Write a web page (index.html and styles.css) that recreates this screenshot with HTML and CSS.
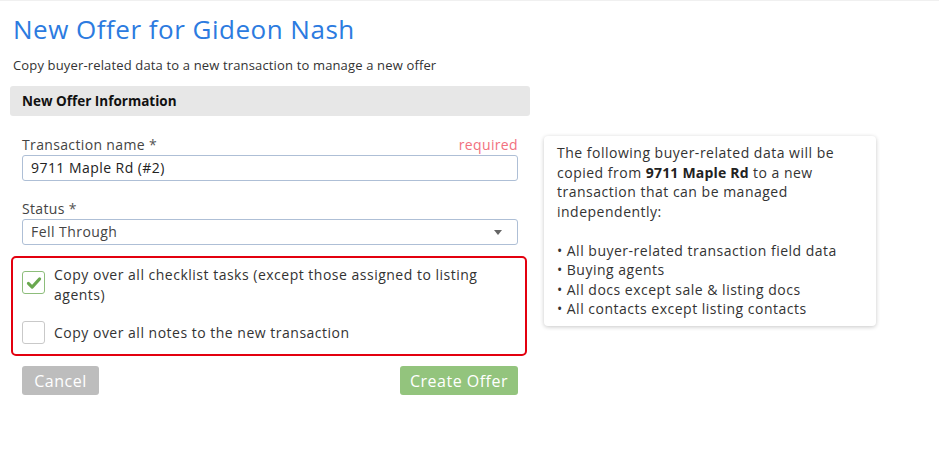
FILE: index.html
```html
<!DOCTYPE html>
<html>
<head>
<meta charset="utf-8">
<link rel="stylesheet" href="styles.css">
</head>
<body>
<div class="topline"></div>
<div class="page">
  <h1 class="title">New Offer for Gideon Nash</h1>
  <p class="subtitle">Copy buyer-related data to a new transaction to manage a new offer</p>
  <div class="layout">
    <div class="left">
      <div class="section-bar">New Offer Information</div>
      <div class="form">
        <div class="label-row">
          <span class="label">Transaction name <span class="star">*</span></span>
          <span class="required">required</span>
        </div>
        <div class="input">9711 Maple Rd (#2)</div>
        <div class="label-row status-row">
          <span class="label">Status <span class="star">*</span></span>
        </div>
        <div class="input select">
          <span>Fell Through</span>
          <span class="caret"></span>
        </div>
        <div class="highlight">
          <div class="check-row first">
            <span class="checkbox checked">
              <svg viewBox="0 0 24 24" width="18" height="18"><path d="M4.5 12.5 L9.5 17.5 L19.5 6.5" fill="none" stroke="#6aa84f" stroke-width="4" stroke-linecap="round" stroke-linejoin="round"/></svg>
            </span>
            <span class="check-text">Copy over all checklist tasks (except those assigned to listing agents)</span>
          </div>
          <div class="check-row second">
            <span class="checkbox"></span>
            <span class="check-text">Copy over all notes to the new transaction</span>
          </div>
        </div>
        <div class="buttons">
          <button class="btn cancel">Cancel</button>
          <button class="btn create">Create Offer</button>
        </div>
      </div>
    </div>
    <div class="info">
      <p>The following buyer-related data will be<br>copied from <b>9711 Maple Rd</b> to a new<br>transaction that can be managed<br>independently:</p>
      <ul>
        <li>All buyer-related transaction field data</li>
        <li>Buying agents</li>
        <li>All docs except sale &amp; listing docs</li>
        <li>All contacts except listing contacts</li>
      </ul>
    </div>
  </div>
</div>
</body>
</html>
```
FILE: styles.css
```css
* { box-sizing: border-box; }
html, body {
  margin: 0;
  padding: 0;
  background: #fff;
  font-family: "Open Sans", "Noto Sans", sans-serif;
  color: #333;
}
.topline {
  height: 1px;
  background: #f0f0f0;
}
.page {
  padding: 0 10px;
}
.title {
  margin: 11px 0 0 3px;
  font-size: 26px;
  font-weight: 400;
  line-height: 34px;
  letter-spacing: 0.5px;
  color: #2c7be0;
}
.subtitle {
  margin: 10px 0 0 3px;
  font-size: 13px;
  line-height: 18px;
  letter-spacing: 0.15px;
  color: #333;
}
.layout {
  display: flex;
  align-items: flex-start;
  gap: 14px;
  margin-top: 12px;
}
.left {
  width: 520px;
}
.section-bar {
  height: 30px;
  background: #e7e7e7;
  border-radius: 3px;
  padding-left: 12px;
  font-size: 13.5px;
  font-weight: 700;
  line-height: 30px;
  color: #111;
}
.form {
  padding: 19px 12px 0 12px;
}
.label-row {
  display: flex;
  justify-content: space-between;
  font-size: 14px;
  line-height: 20px;
  letter-spacing: 0.35px;
  color: #444;
}
.status-row {
  margin-top: 18px;
}
.star { color: #555; }
.required { color: #f2707e; }
.input {
  height: 26px;
  border: 1px solid #aebfd6;
  border-radius: 3px;
  padding: 0 8px;
  font-size: 14px;
  line-height: 24px;
  letter-spacing: 0.45px;
  color: #222;
}
.select {
  display: flex;
  justify-content: space-between;
  align-items: center;
  color: #444;
}
.caret {
  width: 0;
  height: 0;
  border-left: 4px solid transparent;
  border-right: 4px solid transparent;
  border-top: 5px solid #666;
  margin-right: 7px;
}
.highlight {
  margin: 11px -9px 0 -11px;
  border: 2px solid #e3000f;
  border-radius: 5px;
  padding: 7px 7px 10px 9px;
}
.check-row {
  display: flex;
  gap: 9px;
  font-size: 14px;
  line-height: 20px;
  letter-spacing: 0.5px;
  color: #333;
}
.check-row.first { align-items: flex-start; }
.check-row.first .checkbox { margin-top: 6px; }
.check-row.second {
  align-items: center;
  margin-top: 16px;
}
.checkbox {
  flex: 0 0 23px;
  width: 23px;
  height: 23px;
  border: 1px solid #c9c9c9;
  border-radius: 3px;
  display: flex;
  align-items: center;
  justify-content: center;
}
.checkbox.checked {
  border-color: #8dbd7b;
}
.buttons {
  display: flex;
  justify-content: space-between;
  margin-top: 10px;
}
.btn {
  height: 29px;
  border: none;
  border-radius: 3px;
  font-family: inherit;
  font-size: 16px;
  letter-spacing: 0.5px;
  color: #fff;
  padding: 0;
}
.cancel {
  width: 77px;
  background: #bdbdbd;
}
.create {
  width: 118px;
  background: #93c47d;
}
.info {
  margin-top: 50px;
  width: 332px;
  background: #fff;
  border-radius: 4px;
  box-shadow: 0 1px 4px rgba(0,0,0,0.22);
  padding: 7px 13px;
  font-size: 14px;
  line-height: 19.5px;
  letter-spacing: 0.5px;
  color: #333;
}
.info p { margin: 0 0 19.5px 0; }
.info b { font-weight: 700; color: #222; letter-spacing: 0.2px; }
.info ul {
  margin: 0;
  padding: 0;
  list-style: none;
}
.info li::before {
  content: "\2022";
  margin-right: 4px;
}
```
